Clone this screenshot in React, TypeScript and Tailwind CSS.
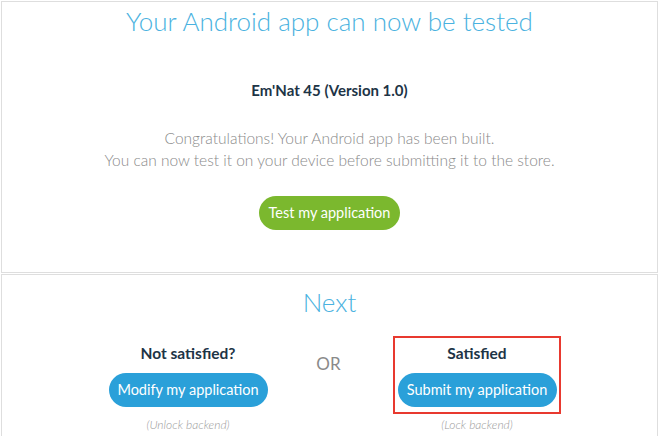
import React from 'react';

const font = { fontFamily: 'Lato, "Open Sans", sans-serif' };

function Choice({
  title,
  action,
  note,
  highlight,
}: {
  title: string;
  action: string;
  note: string;
  highlight?: boolean;
}) {
  return (
    <div className="flex w-[168px] flex-col items-center">
      <div
        className={`flex w-full flex-col items-center border-2 px-[1px] pt-[5px] pb-[5px] ${
          highlight ? 'border-[#e8392f]' : 'border-transparent'
        }`}
      >
        <div className="text-[15.5px] leading-[20px] font-bold text-[#1d3446]">{title}</div>
        <button className="mt-[10px] h-[34px] w-[159px] rounded-full bg-[#2aa0d9] text-[14.5px] text-white">
          {action}
        </button>
      </div>
      <div className="mt-[3px] text-[12px] leading-[16px] font-light italic text-[#9a9a9a]">{note}</div>
    </div>
  );
}

export default function App() {
  return (
    <div className="h-[436px] w-full bg-white px-px pt-px" style={font}>
      {/* Build result */}
      <div className="flex h-[272px] flex-col items-center border border-[#dedede]">
        <h1 className="text-[26px] leading-[38px] font-light text-[#4ab2e0]">
          Your Android app can now be tested
        </h1>
        <div className="mt-[40px] text-[15px] leading-[20px] font-bold text-[#1d3446]">
          Em'Nat 45 (Version 1.0)
        </div>
        <p className="mt-[27px] text-center text-[15.5px] leading-[22px] font-light text-[#8a8a8a]">
          Congratulations! Your Android app has been built.
          <br />
          You can now test it on your device before submitting it to the store.
        </p>
        <button className="mt-[25px] h-[34px] w-[141px] rounded-full bg-[#7bb82e] text-[14.5px] text-white">
          Test my application
        </button>
      </div>

      {/* Next steps */}
      <div className="mt-px h-[163px] border border-[#dedede]">
        <h2 className="pt-[11px] text-center text-[26px] leading-[32px] font-light text-[#4ab2e0]">Next</h2>
        <div className="mt-[18px] flex pl-[102px]">
          <Choice title="Not satisfied?" action="Modify my application" note="(Unlock backend)" />
          <div className="w-[113px] pt-[17px] text-center text-[17px] leading-[22px] text-[#8a8a8a]">OR</div>
          <div className="ml-2">
            <Choice title="Satisfied" action="Submit my application" note="(Lock backend)" highlight />
          </div>
        </div>
      </div>
    </div>
  );
}
